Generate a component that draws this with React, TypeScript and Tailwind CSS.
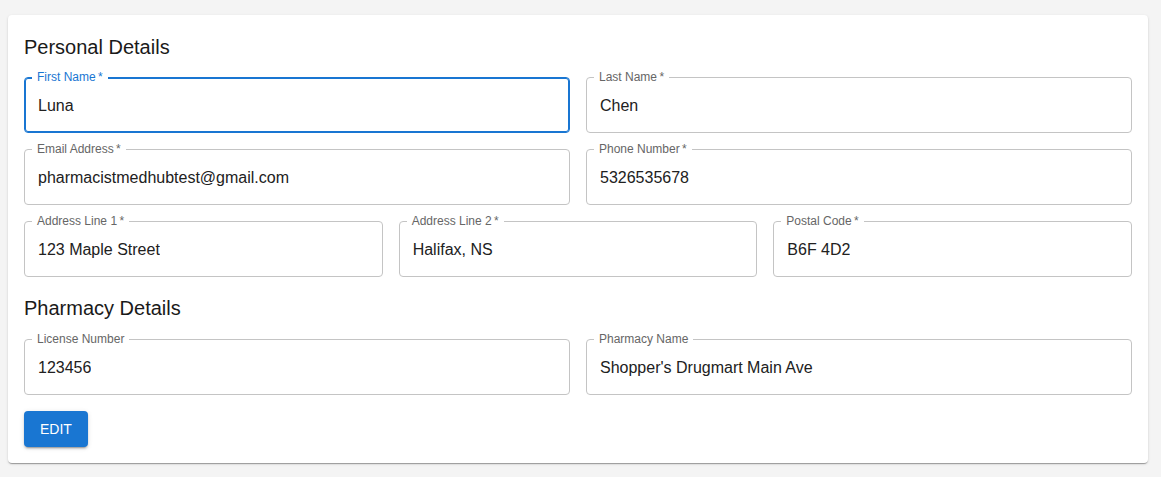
import React from "react";

type FieldProps = { label: string; value: string; required?: boolean; focused?: boolean };

function Field({ label, value, required, focused }: FieldProps) {
  return (
    <div
      className={
        "relative h-[56px] rounded-[4px] border flex items-center pl-[13px] pr-[14px] " +
        (focused ? "border-[#1976d2] ring-1 ring-inset ring-[#1976d2]" : "border-[#c4c4c4]")
      }
    >
      <span
        className={
          "absolute left-[7px] top-[-8px] px-[5px] bg-white text-[12px] leading-[15px] whitespace-nowrap " +
          (focused ? "text-[#1976d2]" : "text-[#666666]")
        }
      >
        {label}
        {required ? "\u2009*" : ""}
      </span>
      <span className="text-[16px] text-[#212121] leading-[23px] truncate">{value}</span>
    </div>
  );
}

export default function App() {
  return (
    <div
      className="min-h-[477px] bg-[#f4f4f4] pt-[15px] pl-2 pr-[13px]"
      style={{ fontFamily: '"Liberation Sans", Arial, sans-serif' }}
    >
      <div className="bg-white rounded-[4px] px-4 pt-4 pb-4 shadow-[0px_2px_1px_-1px_rgba(0,0,0,0.2),0px_1px_1px_0px_rgba(0,0,0,0.14),0px_1px_3px_0px_rgba(0,0,0,0.12)]">
        <h2 className="text-[20px] leading-[32px] text-[#1a1a1a] mb-[14px]">Personal Details</h2>
        <div className="flex flex-col gap-4">
          <div className="grid grid-cols-2 gap-4">
            <Field label="First Name" value="Luna" required focused />
            <Field label="Last Name" value="Chen" required />
          </div>
          <div className="grid grid-cols-2 gap-4">
            <Field label="Email Address" value="pharmacistmedhubtest@gmail.com" required />
            <Field label="Phone Number" value="5326535678" required />
          </div>
          <div className="grid grid-cols-3 gap-4">
            <Field label="Address Line 1" value="123 Maple Street" required />
            <Field label="Address Line 2" value="Halifax, NS" required />
            <Field label="Postal Code" value="B6F 4D2" required />
          </div>
        </div>
        <h2 className="text-[20px] leading-[32px] text-[#1a1a1a] mt-[15px] mb-[15px]">Pharmacy Details</h2>
        <div className="grid grid-cols-2 gap-4">
          <Field label="License Number" value="123456" />
          <Field label="Pharmacy Name" value="Shopper's Drugmart Main Ave" />
        </div>
        <button className="mt-4 h-[36px] px-4 rounded-[4px] bg-[#1976d2] text-white text-[14px] font-medium uppercase shadow-[0px_3px_1px_-2px_rgba(0,0,0,0.2),0px_2px_2px_0px_rgba(0,0,0,0.14),0px_1px_5px_0px_rgba(0,0,0,0.12)]">
          Edit
        </button>
      </div>
    </div>
  );
}
